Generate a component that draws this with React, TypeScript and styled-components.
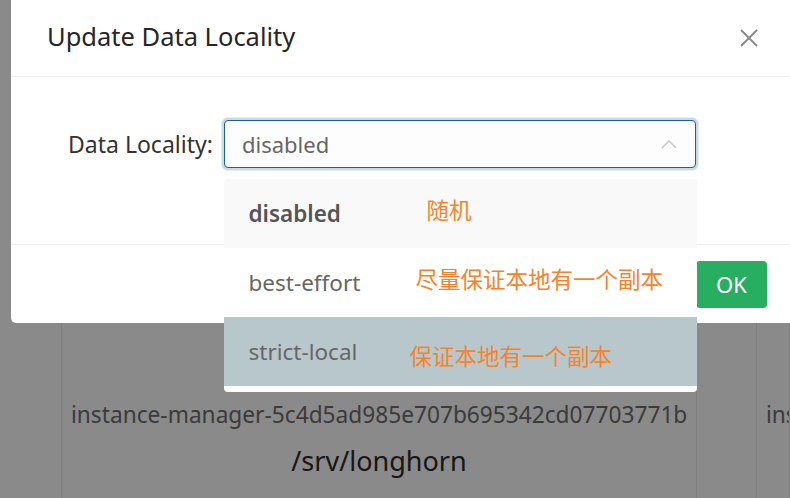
import React from "react";
import styled, { createGlobalStyle } from "styled-components";

const Global = createGlobalStyle`
  html, body { margin: 0; padding: 0; }
  body {
    width: 790px;
    height: 498px;
    overflow: hidden;
    background: #fff;
    font-family: "Noto Sans", "Noto Sans CJK SC", sans-serif;
  }
`;

const Page = styled.div`
  position: relative;
  width: 790px;
  height: 498px;
  overflow: hidden;
  background: #fff;
`;

const Table = styled.div`
  display: grid;
  grid-template-columns: 62px 635px 60px 1fr;
  height: 498px;
`;

const Cell = styled.div<{ $start?: boolean }>`
  border-right: 1px solid #ebebeb;
  display: flex;
  flex-direction: column;
  align-items: ${(p) => (p.$start ? "flex-start" : "center")};
  padding-top: 392px;
  box-sizing: border-box;
  overflow: hidden;
  white-space: nowrap;
`;

const NodeName = styled.div`
  align-self: flex-start;
  padding-left: 9px;
  font-size: 22.7px;
  line-height: 46px;
  color: #6d6d6d;
`;

const Path = styled.div`
  font-size: 27px;
  line-height: 46px;
  color: #2b2b2b;
`;

const Mask = styled.div`
  position: absolute;
  inset: 0;
  background: rgba(0, 0, 0, 0.46);
`;

const Modal = styled.div`
  position: absolute;
  left: 11px;
  top: 0;
  width: 792px;
  background: #fff;
  border-radius: 0 0 5px 5px;
  display: flex;
  flex-direction: column;
`;

const Header = styled.div`
  height: 76px;
  border-bottom: 1px solid #efefef;
  display: flex;
  align-items: center;
  justify-content: space-between;
  padding: 0 45px 0 36px;
`;

const Title = styled.div`
  font-size: 25.5px;
  color: #262626;
  padding-bottom: 4px;
`;

const Close = styled.button`
  border: none;
  background: none;
  padding: 0;
  width: 18px;
  height: 18px;
  display: flex;
  cursor: pointer;
  margin-bottom: 1px;
`;

const Body = styled.div`
  padding: 43px 0 76px 57px;
  display: flex;
  align-items: center;
  gap: 12px;
`;

const Label = styled.label`
  font-size: 23px;
  color: #333;
  width: 144px;
  white-space: nowrap;
  text-align: right;
`;

const SelectBox = styled.div`
  position: relative;
  width: 472px;
  height: 48px;
  box-sizing: border-box;
  border: 1.5px solid #1f5e96;
  border-radius: 4px;
  box-shadow: 0 0 0 2.5px #cbdae7;
  display: flex;
  align-items: center;
  justify-content: space-between;
  padding: 0 18px 0 17px;
  background: #fdfdfd;
`;

const SelectValue = styled.span`
  font-size: 22px;
  color: #666;
`;

const Menu = styled.ul`
  position: absolute;
  top: 58px;
  left: -1.5px;
  width: 473px;
  margin: 0;
  padding: 0 0 6px;
  list-style: none;
  background: #fff;
  border-radius: 4px;
  overflow: hidden;
  z-index: 2;
`;

const Option = styled.li<{ $bg: string; $bold?: boolean }>`
  height: 69px;
  display: flex;
  align-items: center;
  padding-left: 25px;
  background: ${(p) => p.$bg};
  font-size: 22.5px;
  color: ${(p) => (p.$bold ? "#555" : "#666")};
  font-weight: ${(p) => (p.$bold ? 600 : 400)};
  position: relative;
`;

const Note = styled.span<{ $left: number; $dy: number }>`
  position: absolute;
  left: ${(p) => p.$left}px;
  top: 50%;
  transform: translateY(-50%);
  margin-top: ${(p) => p.$dy}px;
  font-family: "Noto Sans CJK SC", sans-serif;
  font-size: 22.5px;
  font-weight: 400;
  color: #f5832b;
`;

const Footer = styled.div`
  height: 78px;
  border-top: 1px solid #efefef;
  display: flex;
  align-items: center;
  justify-content: flex-end;
  padding-right: 36px;
`;

const OkButton = styled.button`
  width: 71px;
  height: 47px;
  border: none;
  border-radius: 4px;
  background: #27ae60;
  color: #fff;
  font-family: "Noto Sans", sans-serif;
  font-size: 22px;
`;

const Chevron = () => (
  <svg width="16" height="10" viewBox="0 0 16 10" fill="none">
    <path d="M1 9 L8 2 L15 9" stroke="#c4c4c4" strokeWidth="1.4" />
  </svg>
);

const CloseIcon = () => (
  <svg width="18" height="18" viewBox="0 0 18 18" fill="none">
    <path d="M1 1 L17 17 M17 1 L1 17" stroke="#888" strokeWidth="1.8" />
  </svg>
);

export default function App() {
  return (
    <>
      <Global />
      <Page>
        <Table>
          <Cell />
          <Cell>
            <NodeName>instance-manager-5c4d5ad985e707b695342cd07703771b</NodeName>
            <Path>/srv/longhorn</Path>
          </Cell>
          <Cell />
          <Cell $start>
            <NodeName>instance-manager</NodeName>
          </Cell>
        </Table>
        <Mask />
        <Modal>
          <Header>
            <Title>Update Data Locality</Title>
            <Close aria-label="close">
              <CloseIcon />
            </Close>
          </Header>
          <Body>
            <Label>Data Locality:</Label>
            <SelectBox>
              <SelectValue>disabled</SelectValue>
              <Chevron />
              <Menu>
                <Option $bg="#f9f9f9" $bold>
                  disabled<Note $left={203} $dy={-5}>随机</Note>
                </Option>
                <Option $bg="#fff">
                  best-effort<Note $left={192} $dy={-5}>尽量保证本地有一个副本</Note>
                </Option>
                <Option $bg="#b8c7cc">
                  strict-local<Note $left={186} $dy={3}>保证本地有一个副本</Note>
                </Option>
              </Menu>
            </SelectBox>
          </Body>
          <Footer>
            <OkButton>OK</OkButton>
          </Footer>
        </Modal>
      </Page>
    </>
  );
}
